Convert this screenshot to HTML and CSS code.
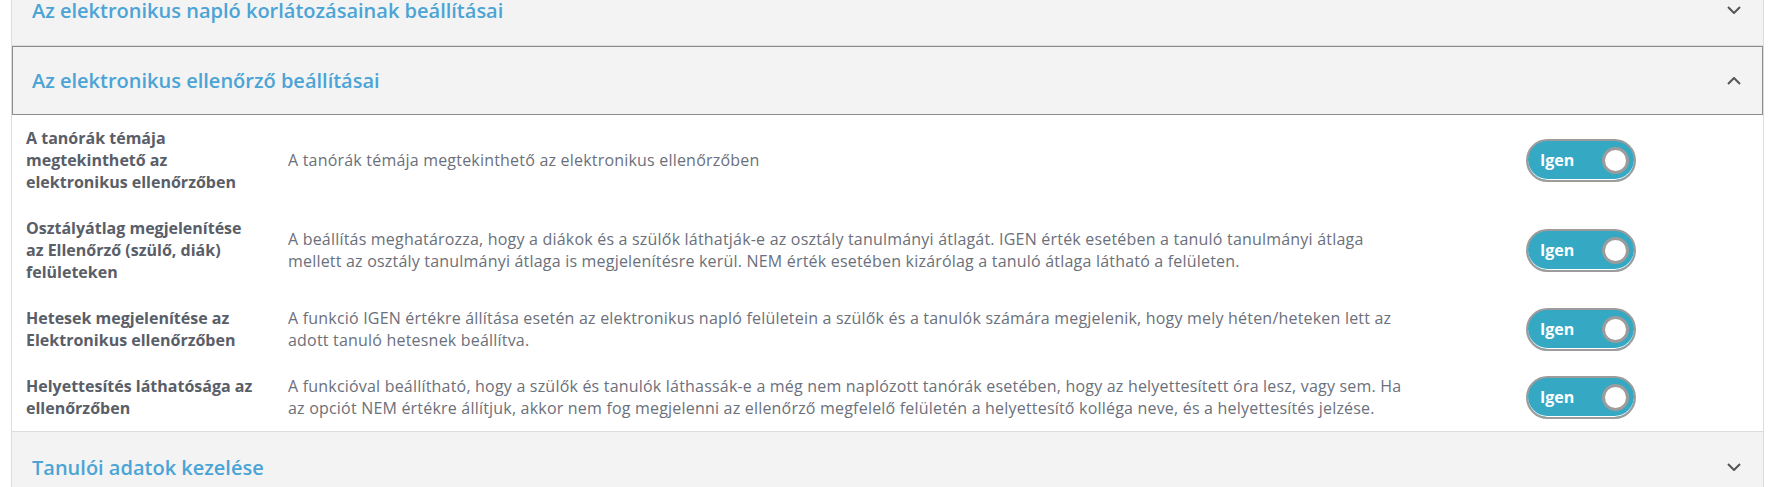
FILE: index.html
```html
<!DOCTYPE html>
<html lang="hu">
<head>
<meta charset="utf-8">
<title>Beállítások</title>
<link rel="stylesheet" href="styles.css">
</head>
<body>
<div class="card">
  <div class="sec-head sec-first">
    <span class="sec-title">Az elektronikus napló korlátozásainak beállításai</span>
    <svg class="chev" width="14" height="8" viewBox="0 0 14 8"><path d="M1 1 L7 7 L13 1" fill="none" stroke="#555" stroke-width="2"/></svg>
  </div>
  <div class="sec-head sec-open">
    <span class="sec-title">Az elektronikus ellenőrző beállításai</span>
    <svg class="chev" width="14" height="8" viewBox="0 0 14 8"><path d="M1 7 L7 1 L13 7" fill="none" stroke="#555" stroke-width="2"/></svg>
  </div>
  <div class="sec-body">
    <div class="row">
      <div class="label">A tanórák témája megtekinthető az elektronikus ellenőrzőben</div>
      <div class="desc">A tanórák témája megtekinthető az elektronikus ellenőrzőben</div>
      <div class="toggle"><span class="tg-text">Igen</span><span class="knob"></span></div>
    </div>
    <div class="row">
      <div class="label">Osztályátlag megjelenítése az Ellenőrző (szülő, diák) felületeken</div>
      <div class="desc">A beállítás meghatározza, hogy a diákok és a szülők láthatják-e az osztály tanulmányi átlagát. IGEN érték esetében a tanuló tanulmányi átlaga mellett az osztály tanulmányi átlaga is megjelenítésre kerül. NEM érték esetében kizárólag a tanuló átlaga látható a felületen.</div>
      <div class="toggle"><span class="tg-text">Igen</span><span class="knob"></span></div>
    </div>
    <div class="row">
      <div class="label">Hetesek megjelenítése az Elektronikus ellenőrzőben</div>
      <div class="desc">A funkció IGEN értékre állítása esetén az elektronikus napló felületein a szülők és a tanulók számára megjelenik, hogy mely héten/heteken lett az adott tanuló hetesnek beállítva.</div>
      <div class="toggle"><span class="tg-text">Igen</span><span class="knob"></span></div>
    </div>
    <div class="row">
      <div class="label">Helyettesítés láthatósága az ellenőrzőben</div>
      <div class="desc">A funkcióval beállítható, hogy a szülők és tanulók láthassák-e a még nem naplózott tanórák esetében, hogy az helyettesített óra lesz, vagy sem. Ha az opciót NEM értékre állítjuk, akkor nem fog megjelenni az ellenőrző megfelelő felületén a helyettesítő kolléga neve, és a helyettesítés jelzése.</div>
      <div class="toggle"><span class="tg-text">Igen</span><span class="knob"></span></div>
    </div>
  </div>
  <div class="sec-head sec-last">
    <span class="sec-title">Tanulói adatok kezelése</span>
    <svg class="chev" width="14" height="8" viewBox="0 0 14 8"><path d="M1 1 L7 7 L13 1" fill="none" stroke="#555" stroke-width="2"/></svg>
  </div>
</div>
</body>
</html>
```
FILE: styles.css
```css
html, body {
  margin: 0;
  padding: 0;
  background: #ffffff;
  overflow: hidden;
}
body {
  font-family: "Open Sans", "Liberation Sans", sans-serif;
  height: 487px;
}
.card {
  margin-left: 11px;
  margin-top: -25px;
  width: 1753px;
  box-sizing: border-box;
  border-left: 1px solid #dddddd;
  border-right: 1px solid #dddddd;
}
.sec-head {
  display: flex;
  align-items: center;
  justify-content: space-between;
  box-sizing: border-box;
  height: 70px;
  padding: 0 22px 0 20px;
  background: #f3f3f3;
}
.sec-first {
  height: 71px;
  border-bottom: 1px solid #dddddd;
}
.sec-open {
  height: 69px;
  border: 1px solid #8c8c8c;
  padding: 0 21px 0 19px;
}
.sec-last {
  border-top: 1px solid #dddddd;
  height: 71px;
}
.sec-title {
  font-size: 20px;
  font-weight: 600;
  color: #4ba4d5;
}
.chev {
  display: block;
}
.sec-body {
  padding: 0 14px;
  background: #ffffff;
}
.row {
  display: grid;
  grid-template-columns: 262px 1238px 110px;
  align-items: center;
  padding: 12px 0;
}
.label {
  padding-right: 28px;
  font-size: 16px;
  font-weight: 700;
  line-height: 22px;
  color: #595e68;
}
.desc {
  padding-right: 121px;
  font-size: 16px;
  letter-spacing: 0.2px;
  line-height: 22px;
  color: #6b707b;
}
.toggle {
  display: flex;
  align-items: center;
  justify-content: space-between;
  box-sizing: border-box;
  width: 110px;
  height: 43px;
  padding: 0 5px 0 12px;
  border: 2px solid #9c9c9c;
  border-radius: 22px;
  background: #35a9c4;
  box-shadow: inset 0 -1px 0 #ffffff;
}
.tg-text {
  font-size: 16px;
  font-weight: 700;
  color: #ffffff;
}
.knob {
  display: block;
  width: 27px;
  height: 27px;
  box-sizing: border-box;
  border: 3px solid #9c9c9c;
  border-radius: 50%;
  background: #ffffff;
}
```
